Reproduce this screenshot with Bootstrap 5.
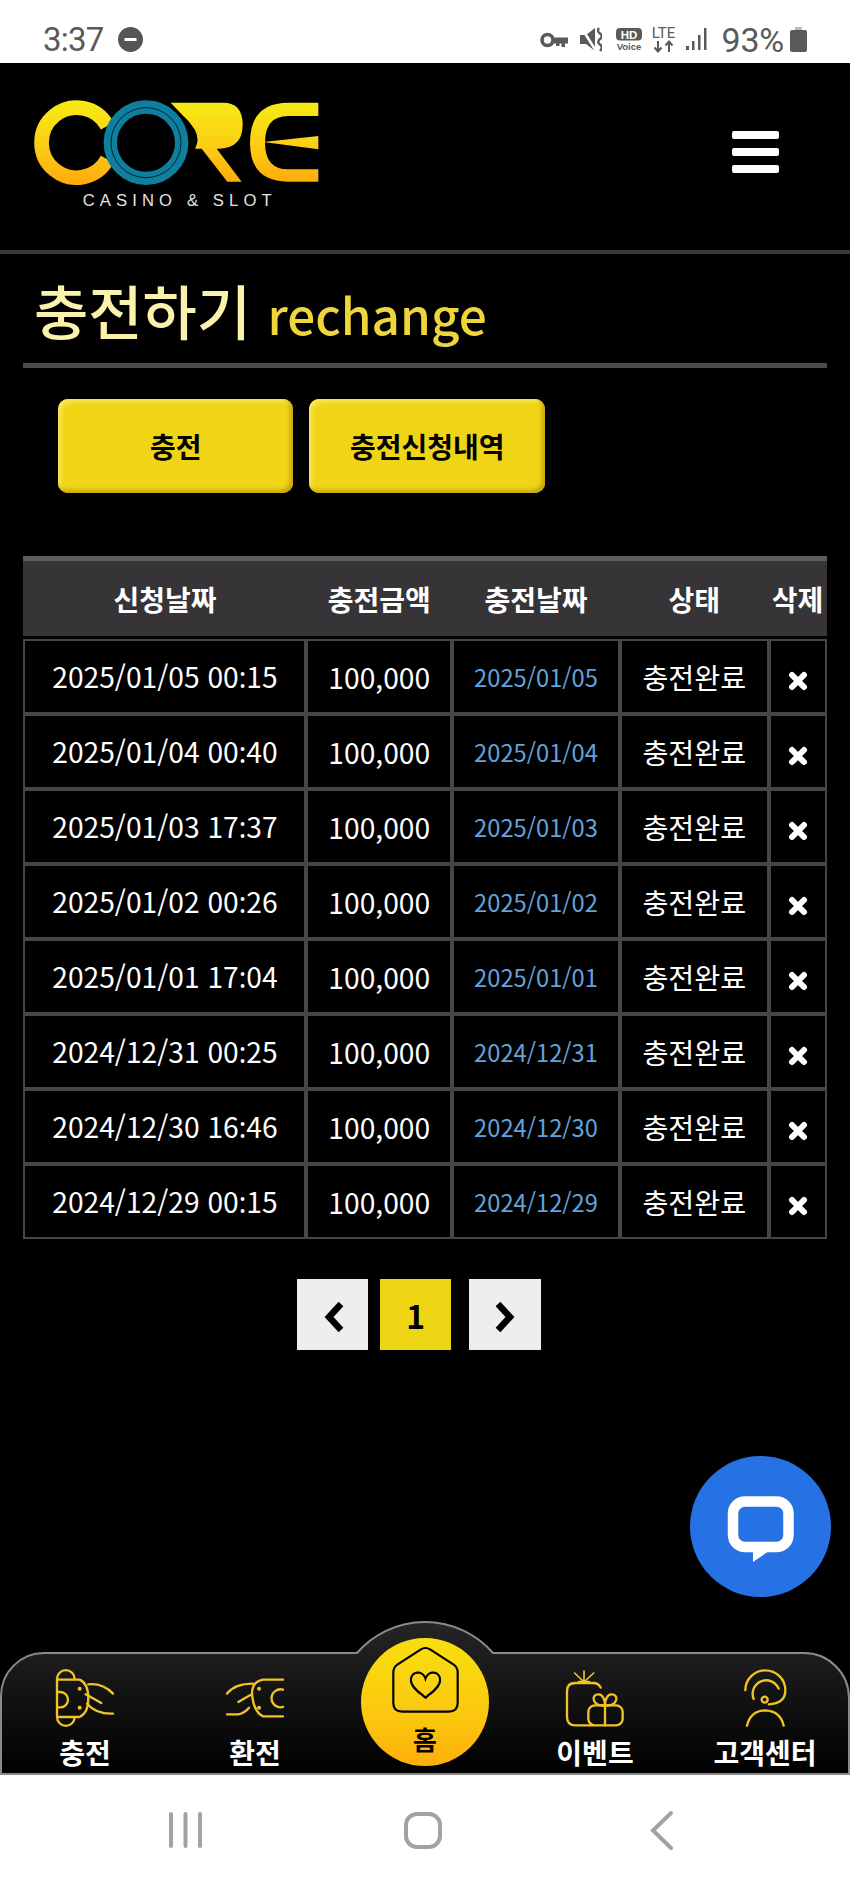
<!DOCTYPE html>
<html lang="ko">
<head>
<meta charset="utf-8">
<title>충전하기</title>
<link href="https://cdn.jsdelivr.net/npm/bootstrap@5.3.0/dist/css/bootstrap.min.css" rel="stylesheet">
<style>
html,body{margin:0;width:850px;height:1889px;overflow:hidden}
body{background:#000;color:#fff;font-family:"Noto Sans CJK KR","Noto Sans",sans-serif;position:relative;display:flex;flex-direction:column}
.sysbar{height:63px;flex:none;background:#fff;color:#5a5a5a;font-family:Roboto,sans-serif;font-size:33px;line-height:1;padding:16px 43px 0}
.sys-time{letter-spacing:-.8px;margin-right:15px}
.sys-icons svg{display:block}
.si-mute{margin-left:12px}
.si-hd{margin-left:14px}
.si-lte{margin-left:9px;margin-top:-3px}
.si-sig{margin-left:10px}
.sys-pct{margin:0 6px 0 14px;font-size:34px;letter-spacing:-.2px}
.topbar{height:191px;flex:none;border-bottom:4px solid #3a3a3a;align-items:flex-start;padding:0;flex-wrap:nowrap}
.logo-wrap{margin:27px 0 0 20px;display:block}
.logo-txt{font-family:"Liberation Sans",sans-serif;font-size:50px;fill:#e2e2e2}
.burger{margin:68px 71px 0 0;width:47px;display:flex;flex-direction:column;gap:9px;background:none;border:0;padding:0}
.burger span{display:block;height:8px;border-radius:2px;background:#fff}
.content{flex:1 1 auto;padding:0 23.4px;min-height:0}
.page-head{height:114px;border-bottom:5px solid #4a4a4a;margin:0;padding:20px 0 0 10.5px;font-size:59px;font-weight:500;line-height:72px;color:#fbf3ac;white-space:nowrap}
.page-head em{font-style:normal;font-size:49.5px;font-weight:500;color:#efd53c;margin-left:0}
.tab-row{margin:31px 0 0 34.6px;gap:16px}
.tab-btn{width:235.5px;height:94px;border:0;border-radius:10px;background:#f0d516;color:#000;font-weight:700;font-size:28px;line-height:1;box-shadow:inset -3px -3px 4px #c4a50c,inset 3px 3px 4px #f9e860;display:flex;align-items:center;justify-content:center;padding:0}
.tab-btn:hover{background:#f0d516;color:#000}
.hist{margin:63px 0 0;width:100%;table-layout:fixed;border-collapse:separate;border-spacing:0;--bs-table-bg:transparent;--bs-table-color:#fff;color:#fff}
.c1{width:283px}.c2{width:145.5px}.c3{width:168px}.c4{width:148.5px}.c5{width:58px}
.hist>thead>tr>th{height:83px;padding:0;background:#363436;border-top:5px solid #5e5e5e;border-bottom:3px solid #000;box-shadow:none;font-size:28px;font-weight:700;line-height:1;text-align:center;vertical-align:middle;color:#fff;white-space:nowrap}
.hist>tbody>tr>td{height:75px;padding:1px 0 0;border:2px solid #464646;font-size:28.2px;line-height:1;text-align:center;vertical-align:middle;color:#fff;white-space:nowrap;box-shadow:none}
.hist>tbody>tr>td.applied{font-size:23.7px;color:#62a3dc;padding-top:3px}
.hist>tbody>tr>td.del-cell{padding:0}
.tcolon{font-family:"Noto Sans",sans-serif}
.del-x{display:block;margin:9px auto 0}
.pager{margin:40px 0 0 273.6px;padding:0;gap:0}
.pager .page-link{width:71.5px;height:71px;padding:0;border:0;border-radius:0!important;background:#efedf0;color:#000;display:flex;align-items:center;justify-content:center;font-size:32px;font-weight:700;line-height:1;margin:0}
.pager .page-item.active .page-link{background:#efd615;color:#000;margin:0 19px 0 11.5px}
.chev-l{margin:5px 0 0 4px}
.chev-r{margin:5px 2px 0 0}
.chat-fab{position:absolute;left:690px;top:1456px;width:141px;height:141px;border-radius:50%;background:#2672e4;display:block}
.appnav{position:relative;height:155px;flex:none;display:flex}
.appnav-shape{position:absolute;left:0;top:0;width:850px;height:155px}
.appnav-item{position:relative;flex:0 0 170px;display:flex;flex-direction:column;align-items:center;text-decoration:none;color:#fff;font-size:28px;font-weight:700;line-height:30px;padding-top:46.67px}
.appnav-item span{margin-top:9px;white-space:nowrap}
.appnav-item svg{display:block}
.home-ball{position:relative;flex:0 0 170px;padding-top:18px;display:flex;justify-content:center}
.home-disc{width:128px;height:128px;border-radius:50%;background:linear-gradient(180deg,#f7df10 0%,#fbc80e 60%,#ffae0c 100%);display:flex;flex-direction:column;align-items:center;padding-top:6px;color:#000;font-size:26px;font-weight:700;line-height:30px;text-decoration:none}
.home-disc span{margin-top:8px}
.softkeys{height:114px;flex:none;background:#fff;position:relative}
.softkeys svg{position:absolute;left:0;top:0}
</style>
</head>
<body>
<div class="sysbar d-flex align-items-center justify-content-between">
  <div class="d-flex align-items-center">
    <span class="sys-time">3:37</span>
    <svg width="25" height="25" viewBox="0 0 25 25"><circle cx="12.5" cy="12.5" r="12.5" fill="#555"/><rect x="6.5" y="11" width="12" height="3" fill="#fff"/></svg>
  </div>
  <div class="sys-icons d-flex align-items-center">
    <svg width="28" height="16" viewBox="0 0 28 16"><circle cx="7.5" cy="8" r="5.5" fill="none" stroke="#5a5a5a" stroke-width="3.6"/><path d="M12 5.500h16v6h-3V15h-3.500v-3.500h-2V14h-3.500v-2.500H12z" fill="#5a5a5a"/></svg>
    <svg class="si-mute" width="22" height="25" viewBox="0 0 22 25"><path d="M0 8h6L15 1v23L6 17H0z" fill="#5a5a5a"/><path d="M1 0l15 24" stroke="#fff" stroke-width="2.500"/><path d="M19 1q-2.500 3 1 5.500t0 5.500 0 5.500 0 6.500" fill="none" stroke="#5a5a5a" stroke-width="2.400"/></svg>
    <svg class="si-hd" width="26" height="23" viewBox="0 0 26 23"><rect x="0" y="0" width="26" height="12.500" rx="4" fill="#5a5a5a"/><text x="13" y="10.500" text-anchor="middle" font-family="Liberation Sans" font-weight="700" font-size="11.500" fill="#fff">HD</text><text x="13" y="22" text-anchor="middle" font-family="Liberation Sans" font-weight="700" font-size="9.500" fill="#5a5a5a">Voice</text></svg>
    <svg class="si-lte" width="25" height="30" viewBox="0 -3 25 30"><text x="12.500" y="12" text-anchor="middle" font-family="Roboto" font-size="15" fill="#5a5a5a">LTE</text><path d="M7 15v10M3.500 21.500L7 25.500l3.500-4M18 26V16M14.500 19.500L18 15.500l3.500 4" fill="none" stroke="#5a5a5a" stroke-width="2"/></svg>
    <svg class="si-sig" width="21" height="23" viewBox="0 0 21 23"><rect x="0" y="18" width="3" height="4" fill="#5a5a5a"/><rect x="6" y="13" width="2.500" height="9" fill="#5a5a5a"/><rect x="12" y="7" width="2.500" height="15" fill="#5a5a5a"/><rect x="18" y="0" width="2.500" height="22" fill="#5a5a5a"/></svg>
    <span class="sys-pct">93%</span>
    <svg width="17" height="25" viewBox="0 0 17 25"><rect x="5" y="0" width="7" height="4" fill="#bbb"/><rect x="0" y="3" width="17" height="22" rx="2" fill="#5a5a5a"/></svg>
  </div>
</div>

<nav class="navbar topbar">
  <a href="#" class="logo-wrap" aria-label="CORE">
    <svg width="320" height="130" viewBox="0 0 960 390" style="display:block">
      <defs>
        <linearGradient id="lg" gradientUnits="userSpaceOnUse" x1="0" y1="30" x2="0" y2="285"><stop offset="0" stop-color="#f6ec14"/><stop offset=".5" stop-color="#fbd014"/><stop offset="1" stop-color="#ffaa0c"/></linearGradient>
      </defs>
      <path d="M262 108A105 105 0 1 0 262 208" fill="none" stroke="url(#lg)" stroke-width="44"/>
      <path d="M452 38H610Q668 38 668 104Q668 172 600 176H590L665 275H622L545 176H525Q540 150 525 120Q505 90 490 78Z" fill="url(#lg)"/>
      <path d="M895 38H805Q690 38 690 158Q690 275 805 275H895V238H805Q735 238 735 158Q735 78 805 78H895Z" fill="url(#lg)"/>
      <path d="M730 156L895 138V178Z" fill="url(#lg)"/>
      <circle cx="378" cy="158" r="107" fill="none" stroke="#0f7f9f" stroke-width="40"/>
      <circle cx="378" cy="158" r="105" fill="none" stroke="#04222c" stroke-width="3"/>
      <text x="188" y="348" class="logo-txt" textLength="567" lengthAdjust="spacing">CASINO &amp; SLOT</text>
    </svg>
  </a>
  <button class="burger" type="button" aria-label="메뉴"><span></span><span></span><span></span></button>
</nav>

<main class="content">
  <h1 class="page-head">충전하기 <em>rechange</em></h1>
  <div class="tab-row d-flex">
    <a href="#" class="btn tab-btn">충전</a>
    <a href="#" class="btn tab-btn">충전신청내역</a>
  </div>
  <table class="table hist">
    <colgroup><col class="c1"><col class="c2"><col class="c3"><col class="c4"><col class="c5"></colgroup>
    <thead><tr><th>신청날짜</th><th>충전금액</th><th>충전날짜</th><th>상태</th><th>삭제</th></tr></thead>
    <tbody>
      <tr><td>2025/01/05 00<span class="tcolon">:</span>15</td><td>100,000</td><td class="applied">2025/01/05</td><td>충전완료</td><td class="del-cell"><svg class="del-x" width="20" height="20" viewBox="0 0 20 20"><path d="M4 4L16 16M16 4L4 16" stroke="#fff" stroke-width="6" stroke-linecap="round"/></svg></td></tr>
      <tr><td>2025/01/04 00<span class="tcolon">:</span>40</td><td>100,000</td><td class="applied">2025/01/04</td><td>충전완료</td><td class="del-cell"><svg class="del-x" width="20" height="20" viewBox="0 0 20 20"><path d="M4 4L16 16M16 4L4 16" stroke="#fff" stroke-width="6" stroke-linecap="round"/></svg></td></tr>
      <tr><td>2025/01/03 17<span class="tcolon">:</span>37</td><td>100,000</td><td class="applied">2025/01/03</td><td>충전완료</td><td class="del-cell"><svg class="del-x" width="20" height="20" viewBox="0 0 20 20"><path d="M4 4L16 16M16 4L4 16" stroke="#fff" stroke-width="6" stroke-linecap="round"/></svg></td></tr>
      <tr><td>2025/01/02 00<span class="tcolon">:</span>26</td><td>100,000</td><td class="applied">2025/01/02</td><td>충전완료</td><td class="del-cell"><svg class="del-x" width="20" height="20" viewBox="0 0 20 20"><path d="M4 4L16 16M16 4L4 16" stroke="#fff" stroke-width="6" stroke-linecap="round"/></svg></td></tr>
      <tr><td>2025/01/01 17<span class="tcolon">:</span>04</td><td>100,000</td><td class="applied">2025/01/01</td><td>충전완료</td><td class="del-cell"><svg class="del-x" width="20" height="20" viewBox="0 0 20 20"><path d="M4 4L16 16M16 4L4 16" stroke="#fff" stroke-width="6" stroke-linecap="round"/></svg></td></tr>
      <tr><td>2024/12/31 00<span class="tcolon">:</span>25</td><td>100,000</td><td class="applied">2024/12/31</td><td>충전완료</td><td class="del-cell"><svg class="del-x" width="20" height="20" viewBox="0 0 20 20"><path d="M4 4L16 16M16 4L4 16" stroke="#fff" stroke-width="6" stroke-linecap="round"/></svg></td></tr>
      <tr><td>2024/12/30 16<span class="tcolon">:</span>46</td><td>100,000</td><td class="applied">2024/12/30</td><td>충전완료</td><td class="del-cell"><svg class="del-x" width="20" height="20" viewBox="0 0 20 20"><path d="M4 4L16 16M16 4L4 16" stroke="#fff" stroke-width="6" stroke-linecap="round"/></svg></td></tr>
      <tr><td>2024/12/29 00<span class="tcolon">:</span>15</td><td>100,000</td><td class="applied">2024/12/29</td><td>충전완료</td><td class="del-cell"><svg class="del-x" width="20" height="20" viewBox="0 0 20 20"><path d="M4 4L16 16M16 4L4 16" stroke="#fff" stroke-width="6" stroke-linecap="round"/></svg></td></tr>
    </tbody>
  </table>
  <ul class="pagination pager">
    <li class="page-item"><a class="page-link" href="#" aria-label="이전"><svg class="chev-l" width="24" height="36" viewBox="0 0 24 36"><path d="M18 5L6 18L18 31" fill="none" stroke="#000" stroke-width="6.500"/></svg></a></li>
    <li class="page-item active"><a class="page-link" href="#">1</a></li>
    <li class="page-item"><a class="page-link" href="#" aria-label="다음"><svg class="chev-r" width="24" height="36" viewBox="0 0 24 36"><path d="M6 5L18 18L6 31" fill="none" stroke="#000" stroke-width="6.500"/></svg></a></li>
  </ul>
</main>

<a href="#" class="chat-fab" aria-label="채팅">
  <svg width="141" height="141" viewBox="0 0 141 141"><rect x="43" y="45.500" width="55.500" height="45.500" rx="12" fill="none" stroke="#fff" stroke-width="10.500"/><path d="M63 91H85L63 106Z" fill="#fff"/></svg>
</a>

<nav class="appnav">
  <svg class="appnav-shape" viewBox="0 0 850 155">
    <defs><linearGradient id="ng" x1="0" y1="0" x2="0" y2="1"><stop offset="0" stop-color="#262626"/><stop offset=".45" stop-color="#141414"/><stop offset="1" stop-color="#000"/></linearGradient></defs>
    <path d="M1 154V76A43 43 0 0 1 44 33H357A90 90 0 0 1 493 33H804A45 45 0 0 1 849 78V154Z" fill="url(#ng)" stroke="#8a8a8a" stroke-width="2"/>
  </svg>
  <a href="#" class="appnav-item">
    <svg width="63.330" height="61.670" viewBox="160 140 190 185" fill="none" stroke="#f0c326" stroke-width="7" stroke-linecap="round"><path d="M172 178V176a26 26 0 0 1 53 0V178M172 178V290a26 26 0 0 0 53 0M172 178H240Q266 190 266 234T240 290H172"/><path d="M172 215h10a23 23 0 0 1 0 46h-10"/><path d="M266 192Q310 188 340 220M258 222L305 248M262 250Q290 282 340 280"/><circle cx="240" cy="205" r="6" fill="#f0c326" stroke="none"/><circle cx="240" cy="262" r="6" fill="#f0c326" stroke="none"/></svg>
    <span>충전</span>
  </a>
  <a href="#" class="appnav-item">
    <svg width="63.330" height="61.670" viewBox="670 140 190 185" fill="none" stroke="#f0c326" stroke-width="7" stroke-linecap="round"><path d="M850 178H790Q752 185 758 230T790 288H850"/><path d="M682 220Q705 190 760 190M716 245L752 224M682 282H716Q735 278 748 262"/><path d="M850 208a27 27 0 1 0 0 52"/><circle cx="778" cy="205" r="6" fill="#f0c326" stroke="none"/><circle cx="778" cy="262" r="6" fill="#f0c326" stroke="none"/></svg>
    <span>환전</span>
  </a>
  <div class="home-ball">
    <a href="#" class="home-disc">
      <svg width="73" height="72" viewBox="130 85 220 215" fill="none" stroke="#000" stroke-width="6.500"><path d="M225 101Q240 91 255 101L325 146Q337 154 337 170V262Q337 288 310 288H170Q143 288 143 262V170Q143 154 155 146Z"/><path d="M240 246C225 232 196 215 196 193C196 165 232 162 240 188C248 162 284 165 284 193C284 215 255 232 240 246Z"/></svg>
      <span>홈</span>
    </a>
  </div>
  <a href="#" class="appnav-item">
    <svg width="63.330" height="61.670" viewBox="415 140 190 185" fill="none" stroke="#f0c326" stroke-width="7" stroke-linecap="round"><path d="M528 202Q522 188 505 188H452Q427 188 427 212V290Q427 315 452 315H505"/><path d="M478 185L450 158M478 185V152M478 185L507 158M462 184H494" stroke-width="5"/><rect x="491" y="255" width="103" height="60" rx="20"/><path d="M541 255V315"/><path d="M541 255C505 260 495 222 522 222C535 222 541 240 541 255C541 240 547 222 560 222C587 222 577 260 541 255Z"/></svg>
    <span>이벤트</span>
  </a>
  <a href="#" class="appnav-item">
    <svg width="63.330" height="61.670" viewBox="923 140 190 185" fill="none" stroke="#f0c326" stroke-width="7" stroke-linecap="round"><path d="M960 210A60 60 0 0 1 1080 210Q1080 250 1030 252"/><path d="M985 236A40 40 0 0 1 1060 205"/><circle cx="1018" cy="238" r="9"/><path d="M965 316Q975 272 1020 270Q1065 272 1075 316"/></svg>
    <span>고객센터</span>
  </a>
</nav>

<div class="softkeys">
  <svg width="850" height="114" viewBox="0 0 850 114" fill="none" stroke="#a2a2a2" stroke-width="4" stroke-linecap="round"><path d="M171 39V71M185.500 39V71M200 39V71"/><rect x="406" y="39" width="34" height="33" rx="11"/><path d="M671 38L653 55.500L671 73"/></svg>
</div>
<script src="https://cdn.jsdelivr.net/npm/bootstrap@5.3.0/dist/js/bootstrap.bundle.min.js"></script>
</body>
</html>
